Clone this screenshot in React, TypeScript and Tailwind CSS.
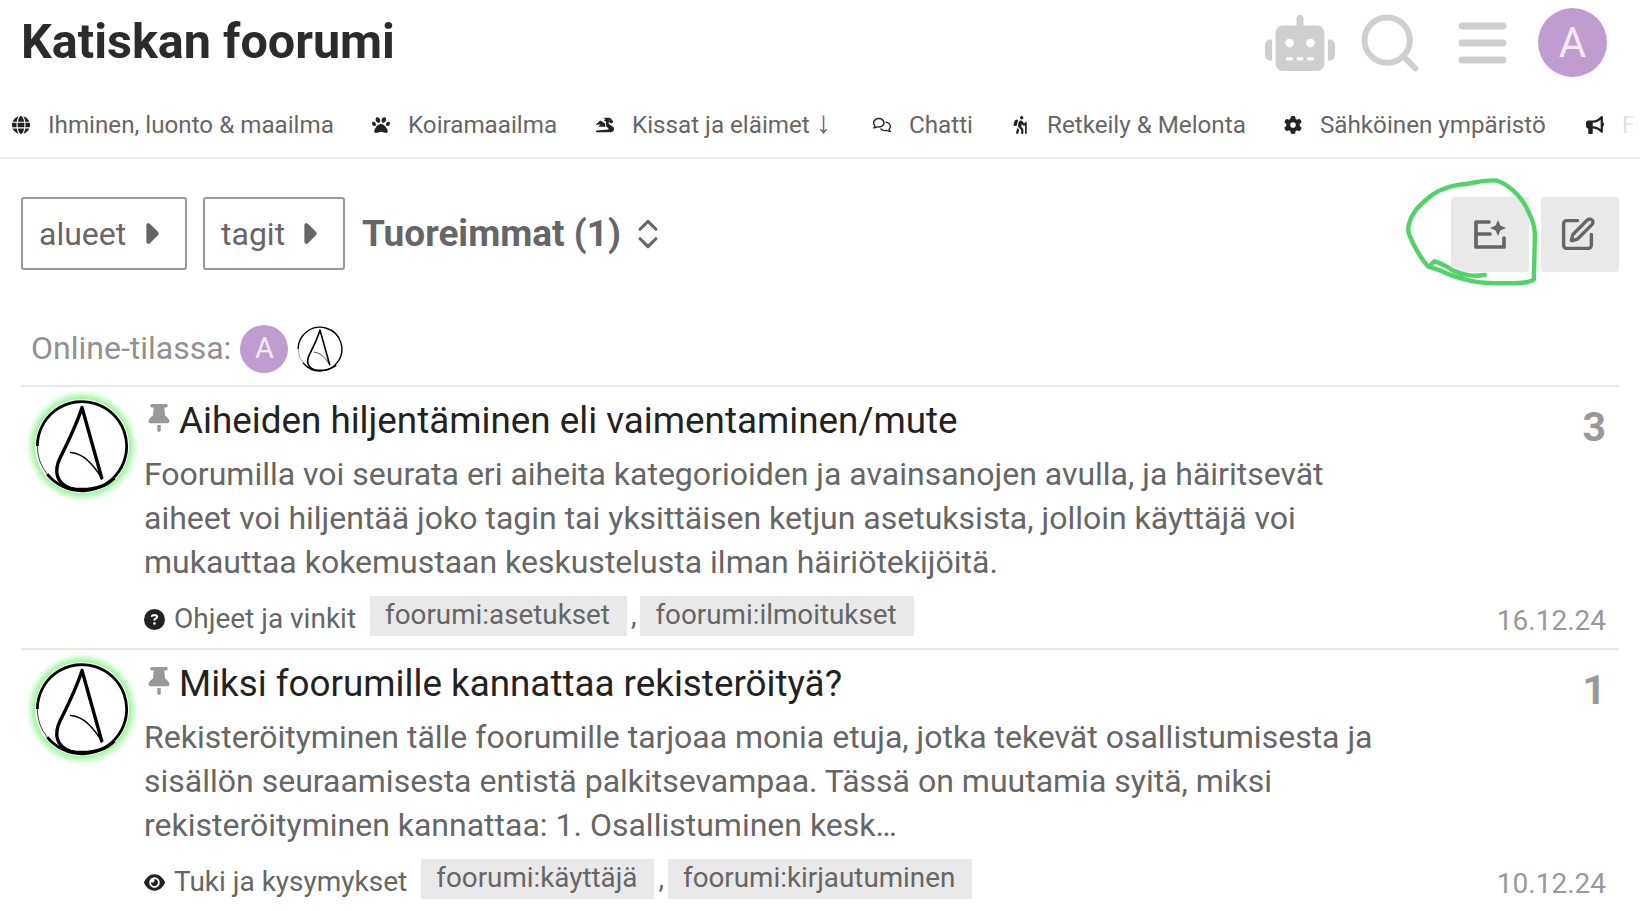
import { ChevronsUpDown, Search, SquarePen } from "lucide-react";
import {
  FaBullhorn,
  FaCaretRight,
  FaCircleQuestion,
  FaDragon,
  FaEye,
  FaGear,
  FaGlobe,
  FaPaw,
  FaPersonHiking,
  FaRegComments,
  FaRobot,
  FaThumbtack,
} from "react-icons/fa6";

function AnarchyLogo({ className }: { className: string }) {
  return (
    <svg viewBox="0 0 100 100" className={className}>
      <circle cx="50" cy="50" r="49" fill="#fff" />
      {/* ring is thick apart from the lower left */}
      <path d="M2.5 50 A47.5 47.5 0 1 1 13 80" fill="none" stroke="#000" strokeWidth="3" />
      <path d="M13 80 A47.5 47.5 0 0 1 2.5 50" fill="none" stroke="#000" strokeWidth="0.8" />
      <path
        d="M71 84 L50 9 C44 28 33 50 27 62 C20 76 22 90 38 95 C52 98 70 96 84 86"
        fill="none"
        stroke="#000"
        strokeWidth="3.6"
        strokeLinecap="round"
        strokeLinejoin="round"
      />
      <path d="M38 57 C52 58 62 70 71 84" fill="none" stroke="#000" strokeWidth="1.6" strokeLinecap="round" />
    </svg>
  );
}

function Letter({ className }: { className: string }) {
  return <div className={"flex items-center justify-center rounded-full bg-[#c09dd0] text-[#f3e9f7] " + className}>A</div>;
}

const navItems = [
  { id: "ihminen", icon: <FaGlobe />, label: "Ihminen, luonto & maailma", w: "w-[360px]" },
  { id: "koira", icon: <FaPaw />, label: "Koiramaailma", w: "w-[224px]" },
  {
    id: "kissat",
    icon: <FaDragon />,
    label: (
      <>
        Kissat ja eläimet <span className="font-['Liberation_Serif',serif] text-[31px] leading-none">↓</span>
      </>
    ),
    w: "w-[277px]",
  },
  { id: "chatti", icon: <FaRegComments />, label: "Chatti", w: "w-[138px]" },
  { id: "retkeily", icon: <FaPersonHiking />, label: "Retkeily & Melonta", w: "w-[273px]" },
  { id: "sahko", icon: <FaGear />, label: "Sähköinen ympäristö", w: "w-[302px]" },
  { id: "foorumi", icon: <FaBullhorn />, label: "Foorumi", w: "w-[120px]" },
];

const topics = [
  {
    title: "Aiheiden hiljentäminen eli vaimentaminen/mute",
    lines: [
      "Foorumilla voi seurata eri aiheita kategorioiden ja avainsanojen avulla, ja häiritsevät",
      "aiheet voi hiljentää joko tagin tai yksittäisen ketjun asetuksista, jolloin käyttäjä voi",
      "mukauttaa kokemustaan keskustelusta ilman häiriötekijöitä.",
    ],
    icon: <FaCircleQuestion />,
    category: "Ohjeet ja vinkit",
    tags: ["foorumi:asetukset", "foorumi:ilmoitukset"],
    count: 3,
    date: "16.12.24",
  },
  {
    title: "Miksi foorumille kannattaa rekisteröityä?",
    lines: [
      "Rekisteröityminen tälle foorumille tarjoaa monia etuja, jotka tekevät osallistumisesta ja",
      "sisällön seuraamisesta entistä palkitsevampaa. Tässä on muutamia syitä, miksi",
      "rekisteröityminen kannattaa: 1. Osallistuminen kesk…",
    ],
    icon: <FaEye />,
    category: "Tuki ja kysymykset",
    tags: ["foorumi:käyttäjä", "foorumi:kirjautuminen"],
    count: 1,
    date: "10.12.24",
  },
];

function FilterButton({ label, w }: { label: string; w: string }) {
  return (
    <button className={"mb-[2px] flex h-[73px] items-center justify-between rounded-[3px] border-2 border-[#999] pl-[16px] pr-[18px] text-[32px] text-[#666] " + w}>
      {label}
      <FaCaretRight className="text-[33px] text-[#666]" />
    </button>
  );
}

export default function App() {
  return (
    <div className="relative h-[911px] w-[1640px] overflow-hidden bg-white font-['Roboto',sans-serif]">
      {/* Header */}
      <header className="flex h-[84px] items-center justify-between pl-[21px] pr-[33px]">
        <h1 className="text-[48.5px] font-bold leading-none text-[#2b2b2b]">Katiskan foorumi</h1>
        <div className="flex items-center text-[#cfcfcf]">
          <FaRobot className="mt-[2px] h-[56px] w-[72px]" />
          <Search className="ml-[20px] mt-[2px] h-[68px] w-[68px]" strokeWidth={2.1} />
          <svg viewBox="0 0 49 42" className="ml-[34px] mt-[2px] h-[42px] w-[49px]" stroke="currentColor" strokeWidth="7" strokeLinecap="round">
            <path d="M4 4 H45 M4 21 H45 M4 38 H45" />
          </svg>
          <Letter className="ml-[31px] h-[69px] w-[69px] text-[42px]" />
        </div>
      </header>

      {/* Categories */}
      <nav className="relative flex h-[75px] items-center overflow-hidden border-b-2 border-[#eeeeee] pl-[12px] pt-[10px]">
        {navItems.map((item) => (
          <div key={item.id} className={"flex shrink-0 items-center text-[24.2px] text-[#666] " + item.w}>
            <span className="flex w-[36px] shrink-0 text-[18px] text-[#222]">{item.icon}</span>
            <span>{item.label}</span>
          </div>
        ))}
        <div className="absolute bottom-0 right-0 top-0 w-[36px] bg-gradient-to-r from-white/50 to-white" />
      </nav>

      <main className="px-[21px]">
        {/* Filter bar */}
        <div className="mt-[38px] flex h-[75px] items-center">
          <FilterButton label="alueet" w="w-[166px]" />
          <div className="w-[16px]" />
          <FilterButton label="tagit" w="w-[142px]" />
          <div className="mb-[2px] ml-[17px] text-[37px] font-bold text-[#666]">Tuoreimmat (1)</div>
          <ChevronsUpDown className="mb-[2px] ml-[8px] h-[38px] w-[38px] text-[#666]" strokeWidth={2} />
          <div className="ml-auto flex gap-[12px]">
            <div className="relative flex h-[75px] w-[78px] items-center justify-center rounded-[3px] bg-[#e9e9e9]">
              <svg viewBox="0 0 32 29" className="h-[29px] w-[32px]" fill="none" stroke="#666" strokeWidth="3.7" strokeLinecap="round" strokeLinejoin="round">
                <path d="M15 2 H2 V27 H30 V18" />
                <path d="M2 14 H16" />
                <path d="M24 0 L26.4 5.6 L32 8 L26.4 10.4 L24 16 L21.6 10.4 L16 8 L21.6 5.6 Z" fill="#666" stroke="none" />
              </svg>
              {/* Hand drawn circle */}
              <svg viewBox="0 0 130 110" className="absolute left-[-50px] top-[-23px] h-[116px] w-[136px]" fill="none">
                <path
                  d="M80 96 C70 98 58 96 50 92 C44 88 36 84 32 83 C28 86 28 88 26 88 C20 82 12 68 8 58 C4 48 12 34 22 26 C32 16 42 12 54 10 C72 8 84 4 92 6 C104 10 116 22 122 36 C126 44 128 50 128 58 L127 100 C124 104 112 104 90 104 C70 104 50 98 38 92 L26 88"
                  stroke="#4fd565"
                  strokeWidth="4.2"
                  strokeLinecap="round"
                  strokeLinejoin="round"
                />
              </svg>
            </div>
            <div className="flex h-[75px] w-[78px] items-center justify-center rounded-[3px] bg-[#e9e9e9] pr-[5px]">
              <SquarePen className="h-[37px] w-[37px] text-[#666]" strokeWidth={2.2} />
            </div>
          </div>
        </div>

        {/* Online users */}
        <div className="mt-[50px] flex h-[52px] items-center pl-[10px]">
          <span className="text-[32px] text-[#919191]">Online-tilassa:</span>
          <Letter className="ml-[9px] mt-[2px] h-[48px] w-[48px] text-[29px]" />
          <AnarchyLogo className="ml-[9px] mt-[2px] h-[46px] w-[46px]" />
        </div>

        {/* Topics */}
        <div className="mt-[11px] border-t-2 border-[#e9e9e9]">
          {topics.map((t) => (
            <div key={t.title} className="flex h-[263px] border-b-2 border-[#e9e9e9]">
              <div className="w-[123px] shrink-0 pl-[14px] pt-[12px]">
                <AnarchyLogo className="h-[94px] w-[94px] rounded-full shadow-[0_0_6px_4px_rgba(110,240,110,0.75)]" />
              </div>
              <div className="min-w-0 flex-1">
                <div className="mt-[15px] flex h-[38px] items-center text-[36.8px] leading-none text-[#222]">
                  <FaThumbtack className="ml-[3px] mr-[8px] mb-[6px] h-[28px] w-[24px] shrink-0 text-[#999]" />
                  {t.title}
                </div>
                <div className="mt-[12px] text-[32px] leading-[44px] text-[#666]">
                  {t.lines.map((l) => (
                    <div key={l}>{l}</div>
                  ))}
                </div>
                <div className="mt-[12px] flex h-[40px] items-center">
                  <span className="mt-[6px] flex w-[30px] text-[21px] text-[#222]">{t.icon}</span>
                  <span className="mt-[5px] text-[28px] text-[#666]">{t.category}</span>
                  <div className="ml-[14px] flex items-center text-[27.8px] text-[#666]">
                    {t.tags.map((tag, i) => (
                      <span key={tag} className="flex items-center">
                        {i > 0 && <span className="mx-[4px]">,</span>}
                        <span className="flex h-[40px] items-center bg-[#e9e9e9] pl-[15px] pr-[17px] pb-[3px]">{tag}</span>
                      </span>
                    ))}
                  </div>
                </div>
              </div>
              <div className="flex w-[170px] shrink-0 flex-col items-end pr-[13px]">
                <div className="mt-[16px] text-[41px] font-bold leading-[48px] text-[#999]">{t.count}</div>
                <div className="mt-auto mb-[9px] text-[28px] leading-[36px] text-[#999]">{t.date}</div>
              </div>
            </div>
          ))}
        </div>
      </main>
    </div>
  );
}
